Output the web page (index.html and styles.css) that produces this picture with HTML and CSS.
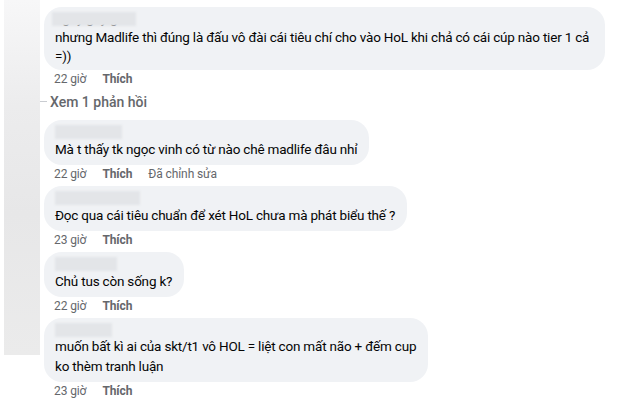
FILE: index.html
```html
<!DOCTYPE html>
<html lang="vi">
<head>
    <meta charset="utf-8">
    <link rel="stylesheet" href="styles.css">
</head>
<body>
    <div class="page">
        <div class="side-strip"></div>

        <div class="thread">
            <div class="comment">
                <div class="bubble bubble-first">
                    <div class="cut-line">nguy gay g</div>
                    <span class="name-blur name-over"></span>
                    <div class="text">nhưng Madlife thì đúng là đấu vô đài cái tiêu chí cho vào HoL khi chả có cái cúp nào tier 1 cả<br>=))</div>
                </div>
                <div class="actions">
                    <span>22 giờ</span>
                    <span class="like">Thích</span>
                </div>
            </div>

            <div class="replies">
                <span class="connector"></span>
                Xem 1 phản hồi
            </div>

            <div class="comment">
                <div class="bubble">
                    <span class="name-blur name-w1"></span>
                    <div class="text">Mà t thấy tk ngọc vinh có từ nào chê madlife đâu nhỉ</div>
                </div>
                <div class="actions">
                    <span>22 giờ</span>
                    <span class="like">Thích</span>
                    <span>Đã chỉnh sửa</span>
                </div>
            </div>

            <div class="comment">
                <div class="bubble">
                    <span class="name-blur name-w2"></span>
                    <div class="text">Đọc qua cái tiêu chuẩn để xét HoL chưa mà phát biểu thế ?</div>
                </div>
                <div class="actions">
                    <span>23 giờ</span>
                    <span class="like">Thích</span>
                </div>
            </div>

            <div class="comment">
                <div class="bubble">
                    <span class="name-blur name-w3"></span>
                    <div class="text">Chủ tus còn sống k?</div>
                </div>
                <div class="actions">
                    <span>22 giờ</span>
                    <span class="like">Thích</span>
                </div>
            </div>

            <div class="comment">
                <div class="bubble bubble-two">
                    <span class="name-blur name-w4"></span>
                    <div class="text">muốn bất kì ai của skt/t1 vô HOL = liệt con mất não + đếm cup<br>ko thèm tranh luận</div>
                </div>
                <div class="actions">
                    <span>23 giờ</span>
                    <span class="like">Thích</span>
                </div>
            </div>
        </div>
    </div>
</body>
</html>
```

FILE: styles.css
```css
body {
    margin: 0;
    padding: 0;
    background-color: #fff;
    font-family: Roboto, "Noto Sans", Arial, sans-serif;
    color: #050505;
    overflow: hidden;
}

.page {
    display: flex;
    align-items: flex-start;
    padding-top: 7px;
}

.side-strip {
    width: 36px;
    height: 355px;
    margin-top: -7px;
    margin-left: 4px;
    background: linear-gradient(to bottom, #f7f7f8 0%, #ececed 30%, #e7e7e8 60%, #ebebeb 100%);
}

.thread {
    display: flex;
    flex-direction: column;
    align-items: flex-start;
    margin-left: 4px;
}

.comment {
    display: flex;
    flex-direction: column;
    align-items: flex-start;
}

.bubble {
    position: relative;
    background-color: #f0f2f5;
    border-radius: 18px;
    padding: 5px 12px 6px 11px;
    font-size: 13.5px;
    letter-spacing: -0.2px;
    line-height: 20px;
    white-space: nowrap;
}

.bubble-first {
    width: 538px;
    padding-top: 2px;
    padding-bottom: 4px;
}

.bubble-first .text {
    line-height: 19px;
}

.bubble-two .text {
    line-height: 19.5px;
}

.cut-line {
    height: 19px;
    line-height: 19px;
    overflow: hidden;
}

.name-blur {
    display: block;
    height: 14px;
    background-color: #e3e5e8;
    filter: blur(1px);
}

.name-over {
    position: absolute;
    top: 5px;
    left: 8px;
    width: 84px;
    height: 14px;
}

.name-w1 { width: 67px; }
.name-w2 { width: 85px; }
.name-w3 { width: 62px; }
.name-w4 { width: 57px; }

.actions {
    display: flex;
    gap: 16px;
    padding: 1px 0 4px 10px;
    font-size: 12px;
    letter-spacing: -0.1px;
    line-height: 16px;
    color: #65676b;
}

.like {
    font-weight: 700;
}

.replies {
    position: relative;
    padding: 1px 0 0 6px;
    height: 28px;
    font-size: 14px;
    line-height: 20px;
    font-weight: 500;
    color: #65676b;
}

.connector {
    position: absolute;
    left: -4px;
    top: 10px;
    width: 7px;
    height: 1px;
    background-color: #c9ccd1;
}
```
